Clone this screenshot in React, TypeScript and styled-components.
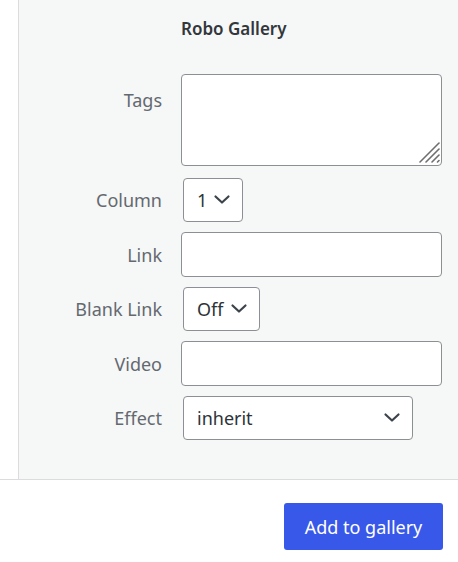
import styled, { createGlobalStyle } from "styled-components";

const GlobalStyle = createGlobalStyle`
  html, body {
    margin: 0;
    padding: 0;
    background: #fff;
  }
  body {
    font-family: "Noto Sans", "Open Sans", sans-serif;
    color: #2c3338;
  }
  * {
    box-sizing: border-box;
  }
`;

const Page = styled.div`
  width: 458px;
  height: 562px;
  display: flex;
  flex-direction: column;
  overflow: hidden;
`;

const Main = styled.div`
  display: flex;
  height: 480px;
  border-bottom: 1px solid #dcdcde;
`;

const Gutter = styled.div`
  width: 19px;
  background: #fff;
  border-right: 1px solid #dcdcde;
`;

const Panel = styled.div`
  flex: 1;
  background: #f6f7f7;
  padding: 16px 16px 0 0;
`;

const Heading = styled.h2`
  margin: 0 0 32px 162px;
  font-size: 17px;
  font-weight: 600;
  line-height: 26px;
  color: #32373c;
`;

const Form = styled.div`
  display: grid;
  grid-template-columns: 143px 1fr;
  column-gap: 19px;
  row-gap: 10px;
  align-items: center;
`;

type LabelProps = {
  $top?: boolean
}
const Label = styled.label<LabelProps>`
  text-align: right;
  font-size: 18px;
  line-height: 24px;
  color: #646970;
  align-self: ${(props) => (props.$top ? "start" : "center")};
  padding-top: ${(props) => (props.$top ? "14px" : "0")};
`;

const AreaWrap = styled.div`
  position: relative;
  width: 261px;
  height: 92px;
  margin-bottom: 2px;
`;

const TextArea = styled.textarea`
  display: block;
  width: 100%;
  height: 100%;
  margin: 0;
  border: 1px solid #8c8f94;
  border-radius: 4px;
  background: #fff;
  resize: none;
  font: inherit;
`;

const Grip = styled.svg`
  position: absolute;
  right: 1px;
  bottom: 1px;
  width: 24px;
  height: 24px;
  pointer-events: none;
`;

const TextInput = styled.input`
  display: block;
  width: 261px;
  height: 45px;
  border: 1px solid #8c8f94;
  border-radius: 4px;
  background: #fff;
  font: inherit;
`;

type SelectProps = {
  $width: number
}
const SelectBox = styled.div<SelectProps>`
  width: ${(props) => props.$width}px;
  height: 44px;
  margin-left: 2px;
  display: flex;
  align-items: center;
  justify-content: space-between;
  padding: 0 11px 0 13px;
  border: 1px solid #8c8f94;
  border-radius: 4px;
  background: #fff;
  font-size: 18px;
  color: #2c3338;
`;

const Chevron = styled.svg`
  width: 18px;
  height: 18px;
  flex-shrink: 0;
`;

const Footer = styled.div`
  flex: 1;
  display: flex;
  justify-content: flex-end;
  align-items: flex-start;
  padding: 23px 15px 0 0;
`;

const PrimaryButton = styled.button`
  width: 159px;
  height: 47px;
  border: none;
  border-radius: 3px;
  background: #3858e9;
  color: #fff;
  font-family: inherit;
  font-size: 18px;
  cursor: pointer;
`;

const Select = (props: { value: string; width: number }) => (
  <SelectBox $width={props.width}>
    <span>{props.value}</span>
    <Chevron viewBox="0 0 18 18" fill="none">
      <path d="M2.5 5.5 L9 11.5 L15.5 5.5" stroke="#3c434a" strokeWidth="2.2" strokeLinecap="round" strokeLinejoin="round" />
    </Chevron>
  </SelectBox>
);

const Tags = () => (
  <AreaWrap>
    <TextArea />
    <Grip viewBox="0 0 24 24" fill="none" stroke="#6e6e6e" strokeWidth="1.6" strokeLinecap="round">
      <path d="M22 2 L3 21" />
      <path d="M22 8 L9 21" />
      <path d="M22 14 L15 21" />
      <path d="M22 19.5 L20.5 21" />
    </Grip>
  </AreaWrap>
);

const App = () => (
  <Page>
    <GlobalStyle />
    <Main>
      <Gutter />
      <Panel>
        <Heading>Robo Gallery</Heading>
        <Form>
          <Label $top>Tags</Label>
          <Tags />
          <Label>Column</Label>
          <Select value="1" width={60} />
          <Label>Link</Label>
          <TextInput />
          <Label>Blank Link</Label>
          <Select value="Off" width={77} />
          <Label>Video</Label>
          <TextInput />
          <Label>Effect</Label>
          <Select value="inherit" width={230} />
        </Form>
      </Panel>
    </Main>
    <Footer>
      <PrimaryButton>Add to gallery</PrimaryButton>
    </Footer>
  </Page>
);

export default App;
